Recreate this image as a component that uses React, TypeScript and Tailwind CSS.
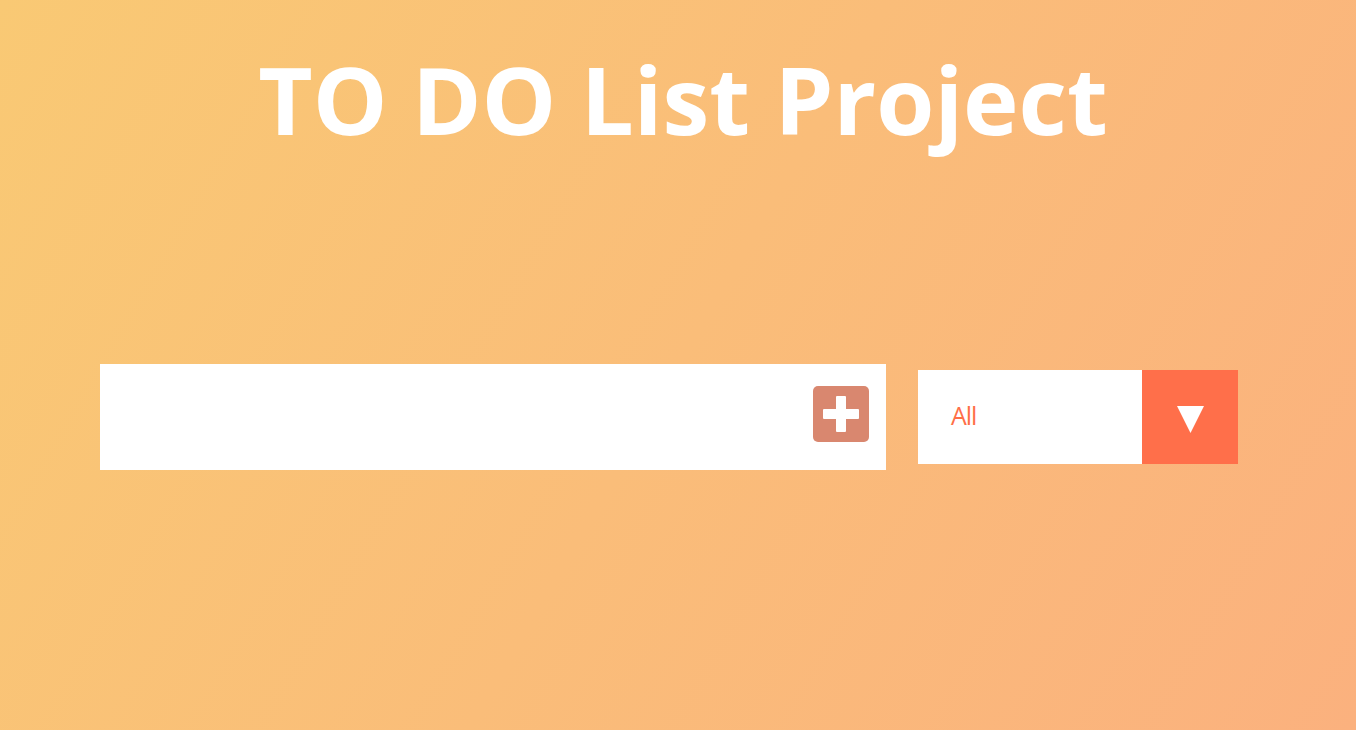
import React from 'react';

const PlusIcon = () => (
  <svg width="36" height="36" viewBox="0 0 36 36" fill="#ffffff">
    <rect x="0" y="13" width="36" height="10" rx="1" />
    <rect x="13" y="0" width="10" height="36" rx="1" />
  </svg>
);

const App: React.FC = () => {
  return (
    <div
      className="min-h-screen w-full bg-[linear-gradient(120deg,#f9c974,#fbb17e)] flex flex-col"
      style={{ fontFamily: '"Open Sans", sans-serif' }}
    >
      <header className="pt-[52px] flex justify-center">
        <h1 className="text-white font-bold text-[94px] leading-none pl-[10px]">TO DO List Project</h1>
      </header>
      <form className="mt-[218px] flex items-center pl-[100px] gap-[32px]" onSubmit={(e) => e.preventDefault()}>
        <div className="w-[786px] h-[106px] bg-white flex items-center justify-end pr-[17px]">
          <button
            type="button"
            className="w-[56px] h-[56px] mb-[6px] rounded-[5px] bg-[#d9876f] flex items-center justify-center"
          >
            <PlusIcon />
          </button>
        </div>
        <div className="w-[320px] h-[94px] bg-white flex">
          <div className="flex-1 flex items-center pl-[33px] pb-[2px] text-[25px] tracking-[-1px] font-medium text-[#ff6f47]">
            All
          </div>
          <div className="w-[96px] h-full bg-[#ff6f4a] flex items-center justify-center pt-[5px]">
            <svg width="27" height="27" viewBox="0 0 27 27">
              <polygon points="0,0 27,0 13.5,27" fill="#ffffff" />
            </svg>
          </div>
        </div>
      </form>
    </div>
  );
};

export default App;
